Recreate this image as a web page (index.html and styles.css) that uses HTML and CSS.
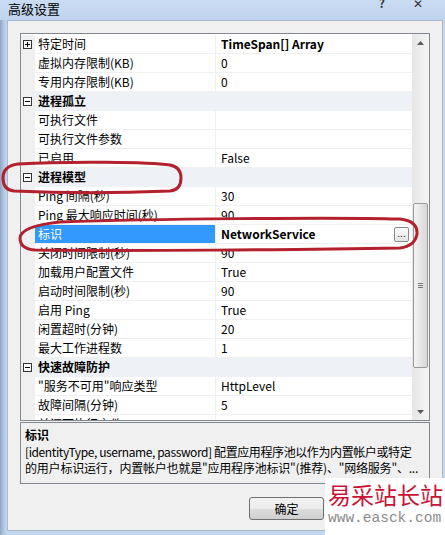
FILE: index.html
```html
<!DOCTYPE html>
<html lang="zh-CN">
<head>
<meta charset="UTF-8">
<title>高级设置</title>
<link rel="stylesheet" href="styles.css">
</head>
<body>
<div class="frame">
	<div class="titlebar">
		<span class="title">高级设置</span>
		<span class="tb-btn help">?</span>
		<span class="tb-btn close">✕</span>
	</div>
	<div class="window">
		<div class="grid">
			<div class="rows">
				<div class="row"><span class="margin"><svg class="box" width="9" height="9" viewBox="0 0 9 9"><rect x="0.5" y="0.5" width="8" height="8" fill="#fff" stroke="#333"/><path d="M2 4.5h5M4.5 2v5" stroke="#000"/></svg></span><span class="name">特定时间</span><span class="value bold">TimeSpan[] Array</span></div>
				<div class="row"><span class="margin"></span><span class="name">虚拟内存限制(KB)</span><span class="value">0</span></div>
				<div class="row"><span class="margin"></span><span class="name">专用内存限制(KB)</span><span class="value">0</span></div>
				<div class="row cat"><span class="margin"><svg class="box" width="9" height="9" viewBox="0 0 9 9"><rect x="0.5" y="0.5" width="8" height="8" fill="#fff" stroke="#333"/><path d="M2 4.5h5" stroke="#000"/></svg></span><span class="name">进程孤立</span><span class="value"></span></div>
				<div class="row"><span class="margin"></span><span class="name">可执行文件</span><span class="value"></span></div>
				<div class="row"><span class="margin"></span><span class="name">可执行文件参数</span><span class="value"></span></div>
				<div class="row"><span class="margin"></span><span class="name">已启用</span><span class="value">False</span></div>
				<div class="row cat"><span class="margin"><svg class="box" width="9" height="9" viewBox="0 0 9 9"><rect x="0.5" y="0.5" width="8" height="8" fill="#fff" stroke="#333"/><path d="M2 4.5h5" stroke="#000"/></svg></span><span class="name">进程模型</span><span class="value"></span></div>
				<div class="row"><span class="margin"></span><span class="name">Ping 间隔(秒)</span><span class="value">30</span></div>
				<div class="row"><span class="margin"></span><span class="name">Ping 最大响应时间(秒)</span><span class="value">90</span></div>
				<div class="row sel"><span class="margin"></span><span class="name">标识</span><span class="value bold">NetworkService<span class="dots">...</span></span></div>
				<div class="row"><span class="margin"></span><span class="name">关闭时间限制(秒)</span><span class="value">90</span></div>
				<div class="row"><span class="margin"></span><span class="name">加载用户配置文件</span><span class="value">True</span></div>
				<div class="row"><span class="margin"></span><span class="name">启动时间限制(秒)</span><span class="value">90</span></div>
				<div class="row"><span class="margin"></span><span class="name">启用 Ping</span><span class="value">True</span></div>
				<div class="row"><span class="margin"></span><span class="name">闲置超时(分钟)</span><span class="value">20</span></div>
				<div class="row"><span class="margin"></span><span class="name">最大工作进程数</span><span class="value">1</span></div>
				<div class="row cat"><span class="margin"><svg class="box" width="9" height="9" viewBox="0 0 9 9"><rect x="0.5" y="0.5" width="8" height="8" fill="#fff" stroke="#333"/><path d="M2 4.5h5" stroke="#000"/></svg></span><span class="name">快速故障防护</span><span class="value"></span></div>
				<div class="row"><span class="margin"></span><span class="name">"服务不可用"响应类型</span><span class="value">HttpLevel</span></div>
				<div class="row"><span class="margin"></span><span class="name">故障间隔(分钟)</span><span class="value">5</span></div>
				<div class="row"><span class="margin"></span><span class="name">关闭可执行文件</span><span class="value"></span></div>
			</div>
			<div class="scrollbar">
				<div class="arrow"><svg width="7" height="4" viewBox="0 0 7 4"><path d="M0 4L3.5 0L7 4Z" fill="#5a5a5a"/></svg></div>
				<div class="track">
					<div class="thumb"><span class="grip"></span></div>
				</div>
				<div class="arrow"><svg width="7" height="4" viewBox="0 0 7 4"><path d="M0 0L3.5 4L7 0Z" fill="#5a5a5a"/></svg></div>
			</div>
		</div>
		<div class="desc">
			<div class="desc-title">标识</div>
			<div class="desc-line tight">[identityType, username, password] 配置应用程序池以作为内置帐户或特定</div>
			<div class="desc-line">的用户标识运行，内置帐户也就是"应用程序池标识"(推荐)、"网络服务"、...</div>
		</div>
		<div class="buttons">
			<button class="btn">确定</button>
		</div>
	</div>
</div>

<!-- red pen marks drawn over the dialog -->
<svg class="marks" width="445" height="535" viewBox="0 0 445 535">
	<path d="M18 164 C70 161,150 162,170 165 Q181 167,181 178 Q181 190,170 191 C120 193,60 193,14 191 Q3 190,3 178 Q3 166,18 164 Z" />
	<path d="M60 222 C150 219,330 217,400 219 Q418 221,417 234 Q415 246,400 248 C300 250,120 251,35 250 Q20 249,20 238 Q21 226,60 222 Z" />
</svg>

<div class="watermark">
	<div class="wm-cn">易采站长站</div>
	<div class="wm-url">www.easck.com</div>
</div>
</body>
</html>
```

FILE: styles.css
```css
* {
	box-sizing: border-box;
}

html, body {
	margin: 0;
	padding: 0;
}

body {
	width: 445px;
	height: 535px;
	overflow: hidden;
	position: relative;
	background: #b7cee9;
	font-family: "Noto Sans CJK SC", "Open Sans", sans-serif;
	font-size: 12px;
	color: #000;
}

.frame {
	height: 535px;
	background: linear-gradient(90deg, #8fa5c2 0, #b3c9e3 4px, #c2d6ee 7px, #c2d6ee 100%);
}

.titlebar {
	height: 20px;
	display: flex;
	align-items: flex-start;
	padding-left: 8px;
	background: linear-gradient(#cadcf2, #bfd4ee);
}

.title {
	font-size: 13px;
	line-height: 17px;
}

.tb-btn {
	font-size: 12px;
	line-height: 6px;
	color: #333;
}

.help {
	margin-left: auto;
	font-weight: bold;
}

.close {
	margin-left: 28px;
	margin-right: 22px;
}

.window {
	margin-left: 7px;
	width: 436px;
	height: 511px;
	background: #f0f0f0;
	border: 1px solid #a9b9cc;
	padding: 12px 12px 0 12px;
}

/* property grid */
.grid {
	width: 410px;
	height: 388px;
	border: 1px solid #828790;
	background: #fff;
	display: flex;
}

.rows {
	width: 391px;
	height: 386px;
	overflow: hidden;
	padding-top: 1px;
}

.row {
	display: grid;
	grid-template-columns: 14px 181px 196px;
	height: 19px;
}

.row > span {
	border-bottom: 1px solid #f0f0f0;
	line-height: 18px;
	white-space: nowrap;
	overflow: hidden;
}

.margin {
	background: #f0f0f0;
	display: flex;
	align-items: center;
	padding-left: 2px;
}

.box {
	display: block;
}

.name {
	padding-left: 3px;
	border-right: 1px solid #f0f0f0;
}

.value {
	padding-left: 5px;
}

.bold {
	font-weight: bold;
}

.cat .name,
.cat .value {
	background: #eef1f5;
	border-bottom-color: #eef1f5;
}

.cat .name {
	font-weight: bold;
	border-right: none;
}

.sel .name {
	background: #3399ff;
	color: #fff;
}

.sel .value {
	display: flex;
	align-items: center;
}

.dots {
	margin-left: auto;
	margin-right: 3px;
	width: 15px;
	height: 15px;
	border: 1px solid #8a8a8a;
	border-radius: 2px;
	background: linear-gradient(#fdfdfd, #e4e4e4);
	font-weight: normal;
	font-size: 10px;
	line-height: 10px;
	text-align: center;
	color: #222;
}

/* scrollbar */
.scrollbar {
	width: 17px;
	height: 386px;
	display: flex;
	flex-direction: column;
	background: linear-gradient(90deg, #e6e6e6, #f5f5f5);
}

.arrow {
	height: 17px;
	display: flex;
	align-items: center;
	justify-content: center;
}

.track {
	flex: 1;
	padding: 152px 1px 0 1px;
}

.thumb {
	height: 165px;
	border: 1px solid #9a9a9a;
	border-radius: 2px;
	background: linear-gradient(90deg, #f4f4f4, #e2e2e2 60%, #d6d6d6);
	display: flex;
	align-items: center;
	justify-content: center;
}

.grip {
	width: 5px;
	height: 5px;
	border-top: 1px solid #777;
	border-bottom: 1px solid #777;
	background: linear-gradient(transparent 1px, #777 1px, #777 2px, transparent 2px);
}

/* description panel */
.desc {
	margin-top: 1px;
	height: 62px;
	border: 1px solid #828790;
	background: #f0f0f0;
	padding: 3px 0 0 4px;
}

.desc-title {
	font-weight: bold;
	line-height: 18px;
}

.desc-line {
	line-height: 16px;
	white-space: nowrap;
	overflow: hidden;
	letter-spacing: -0.2px;
}

.desc-line.tight {
	letter-spacing: -0.4px;
}

.buttons {
	display: flex;
	margin-top: 13px;
	padding-left: 229px;
}

.btn {
	width: 75px;
	height: 23px;
	border: 1px solid #707070;
	border-radius: 3px;
	background: linear-gradient(#f2f2f2 0, #ebebeb 50%, #dddddd 50%, #cfcfcf 100%);
	font-family: inherit;
	font-size: 12px;
	color: #000;
	padding: 0;
}

/* overlays */
.marks {
	position: absolute;
	left: 0;
	top: 0;
	pointer-events: none;
}

.marks path {
	fill: none;
	stroke: #b3202e;
	stroke-width: 3;
}

.watermark {
	position: absolute;
	left: 325px;
	top: 478px;
	width: 120px;
	height: 57px;
	background: #fff;
	padding: 2px 0 0 3px;
}

.wm-cn {
	font-size: 23px;
	line-height: 28px;
	color: #cc1236;
	white-space: nowrap;
}

.wm-url {
	font-family: "Liberation Mono", monospace;
	font-size: 14.5px;
	line-height: 20px;
	color: #8c8c8c;
	white-space: nowrap;
}
```
